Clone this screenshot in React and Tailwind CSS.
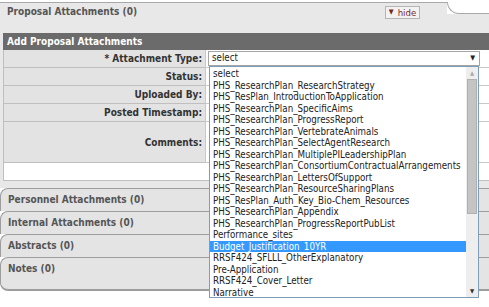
import React from "react";

const options = [
  "select",
  "PHS_ResearchPlan_ResearchStrategy",
  "PHS_ResPlan_IntroductionToApplication",
  "PHS_ResearchPlan_SpecificAims",
  "PHS_ResearchPlan_ProgressReport",
  "PHS_ResearchPlan_VertebrateAnimals",
  "PHS_ResearchPlan_SelectAgentResearch",
  "PHS_ResearchPlan_MultiplePILeadershipPlan",
  "PHS_ResearchPlan_ConsortiumContractualArrangements",
  "PHS_ResearchPlan_LettersOfSupport",
  "PHS_ResearchPlan_ResourceSharingPlans",
  "PHS_ResPlan_Auth_Key_Bio-Chem_Resources",
  "PHS_ResearchPlan_Appendix",
  "PHS_ResearchPlan_ProgressReportPubList",
  "Performance_sites",
  "Budget_Justification_10YR",
  "RRSF424_SFLLL_OtherExplanatory",
  "Pre-Application",
  "RRSF424_Cover_Letter",
  "Narrative",
];

const rows = [
  { label: "* Attachment Type:", h: "h-[18px]" },
  { label: "Status:", h: "h-[18px]" },
  { label: "Uploaded By:", h: "h-[18px]" },
  { label: "Posted Timestamp:", h: "h-[18px]" },
  { label: "Comments:", h: "h-[41px]" },
];

const tabs = ["Personnel Attachments (0)", "Internal Attachments (0)", "Abstracts (0)"];

export default function App() {
  return (
    <div className="relative w-[489px] h-[307px] bg-white pt-[2px] font-['DejaVu_Sans_Condensed','DejaVu_Sans',sans-serif] [font-stretch:condensed] text-[10px] overflow-hidden">
      {/* top tab */}
      <div className="flex h-[31px]">
        <div className="w-[447px] bg-[#e8e8e8] border-t border-[#a9a9a9] flex items-start justify-between pl-[7px] pr-[27px] pt-[2px]">
          <span className="font-bold text-[#555] leading-[13px]">Proposal Attachments (0)</span>
          <button className="mt-[1px] h-[13px] w-[35px] flex items-center justify-center gap-[4px] bg-[#f2f2f2] border border-[#b5b5b5] text-[#7a2a1a] text-[9.5px] leading-[11px]">
            <span className="text-[7px]">▼</span>hide
          </button>
        </div>
        <div className="flex-1 flex flex-col">
          <div className="h-[12px] bg-white border-l border-b border-[#a9a9a9] rounded-bl-[12px]" />
          <div className="flex-1 bg-[#e8e8e8]" />
        </div>
      </div>

      {/* section body */}
      <div className="bg-[#e8e8e8] pl-[3px] pb-[7px]">
        <div className="h-[17px] bg-[#6b6b6b] text-white font-bold pl-[4px] leading-[17px]">
          Add Proposal Attachments
        </div>
        {rows.map((r, i) => (
          <div key={i} className={`grid grid-cols-[202px_1fr] ${r.h}`}>
            <div className="bg-[#e3e3e3] border-b border-l border-[#bfbfbf] flex items-center justify-end pr-[3px] font-bold text-[#333]">
              {r.label}
            </div>
            <div className="bg-white border-b border-l border-[#c8c8c8] pl-[2px] pt-[1px]">
              {i === 0 && (
                <div className="w-[272px] h-[15px] border border-[#a5a5a5] bg-white flex items-center justify-between pl-[3px] pr-[4px] text-[#222] text-[9.7px]">
                  <span>select</span>
                  <span className="text-[7px]">▼</span>
                </div>
              )}
            </div>
          </div>
        ))}
        <div className="h-[18px] bg-white border-b border-l border-[#bfbfbf]" />
      </div>

      {/* collapsed tabs */}
      {tabs.map((t) => (
        <div key={t} className="h-[23px] bg-[#e4e4e4] border-t border-l border-[#9d9d9d] rounded-tl-[8px] pl-[7px] pt-[4px] font-bold text-[#555] leading-[13px]">
          {t}
        </div>
      ))}
      <div className="h-[34px] bg-[#e4e4e4] border-t border-l border-b-2 border-[#9d9d9d] rounded-tl-[8px] rounded-bl-[8px] pl-[7px] pt-[4px] font-bold text-[#555] leading-[13px]">
        Notes (0)
      </div>

      {/* open select list */}
      <div className="absolute left-[209px] top-[66px] w-[270px] h-[232px] bg-white border border-[#7f9db9] flex text-[9.7px]">
        <ul className="flex-1 pt-[1px] text-[#222]">
          {options.map((o) => (
            <li
              key={o}
              className={
                o === "Budget_Justification_10YR"
                  ? "h-[11.5px] leading-[11.5px] pl-[3px] whitespace-nowrap bg-[#3399ff] text-white"
                  : "h-[11.5px] leading-[11.5px] pl-[3px] whitespace-nowrap"
              }
            >
              {o}
            </li>
          ))}
        </ul>
        <div className="w-[12px] bg-[#eeeeee] flex flex-col items-center">
          <span className="text-[6px] text-[#aaa] h-[12px] leading-[12px]">▲</span>
          <div className="w-[10px] h-[135px] bg-[#c4c4c4] border border-[#b0b0b0]" />
          <div className="flex-1" />
          <span className="text-[6px] text-[#333] h-[12px] leading-[12px]">▼</span>
        </div>
      </div>
    </div>
  );
}
